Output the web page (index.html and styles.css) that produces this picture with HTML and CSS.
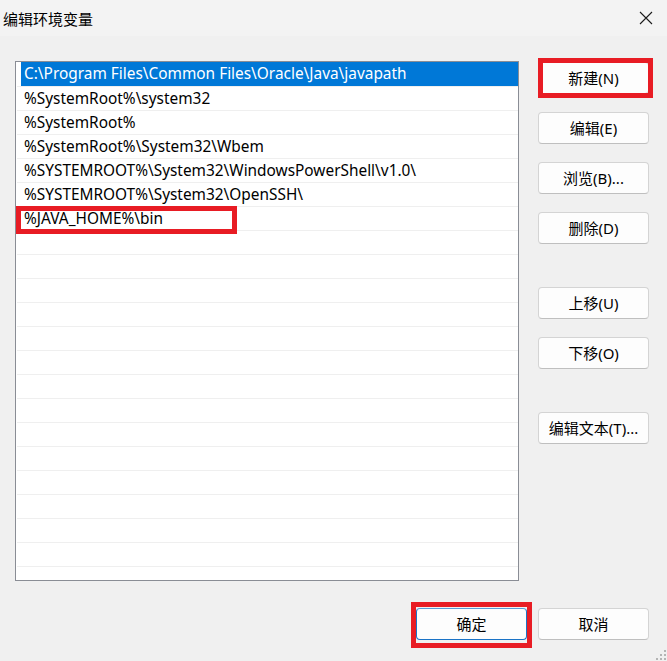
FILE: index.html
```html
<!DOCTYPE html>
<html lang="zh-CN">
<head>
  <meta charset="UTF-8">
  <meta name="viewport" content="width=device-width, initial-scale=1.0">
  <title>编辑环境变量</title>
  <link rel="stylesheet" href="styles.css">
</head>
<body>

  <div class="window">
    <!-- Title bar -->
    <div class="titlebar">
      <span class="title">编辑环境变量</span>
      <svg class="close" width="14" height="14" viewBox="0 0 14 14">
        <path d="M1 1 L13 13 M13 1 L1 13" stroke="#1b1b1b" stroke-width="1.1" fill="none"/>
      </svg>
    </div>

    <div class="main">
      <!-- Path list -->
      <div class="list">
        <div class="row selected"><span class="cell">C:\Program Files\Common Files\Oracle\Java\javapath</span></div>
        <div class="row"><span class="cell">%SystemRoot%\system32</span></div>
        <div class="row"><span class="cell">%SystemRoot%</span></div>
        <div class="row"><span class="cell">%SystemRoot%\System32\Wbem</span></div>
        <div class="row"><span class="cell">%SYSTEMROOT%\System32\WindowsPowerShell\v1.0\</span></div>
        <div class="row"><span class="cell">%SYSTEMROOT%\System32\OpenSSH\</span></div>
        <div class="row editing"><span class="cell">%JAVA_HOME%\bin</span></div>
        <div class="row"></div>
        <div class="row"></div>
        <div class="row"></div>
        <div class="row"></div>
        <div class="row"></div>
        <div class="row"></div>
        <div class="row"></div>
        <div class="row"></div>
        <div class="row"></div>
        <div class="row"></div>
        <div class="row"></div>
        <div class="row"></div>
        <div class="row"></div>
        <div class="row"></div>
        <div class="row"></div>
      </div>

      <!-- Side buttons -->
      <div class="side">
        <button class="btn marked">新建(N)</button>
        <button class="btn">编辑(E)</button>
        <button class="btn">浏览(B)...</button>
        <button class="btn">删除(D)</button>
        <button class="btn spaced">上移(U)</button>
        <button class="btn">下移(O)</button>
        <button class="btn spaced">编辑文本(T)...</button>
      </div>
    </div>

    <!-- Dialog buttons -->
    <div class="footer">
      <button class="btn default marked-ok">确定</button>
      <button class="btn">取消</button>
    </div>

    <svg class="grip" width="13" height="13" viewBox="0 0 13 13">
      <rect x="10" y="2" width="2" height="2" fill="#b4b4b4"/>
      <rect x="6" y="6" width="2" height="2" fill="#b4b4b4"/>
      <rect x="10" y="6" width="2" height="2" fill="#b4b4b4"/>
      <rect x="2" y="10" width="2" height="2" fill="#b4b4b4"/>
      <rect x="6" y="10" width="2" height="2" fill="#b4b4b4"/>
      <rect x="10" y="10" width="2" height="2" fill="#b4b4b4"/>
    </svg>
  </div>

</body>
</html>
```

FILE: styles.css
```css
body {
  margin: 0;
  padding: 0;
  background-color: #f0f0f0;
  font-family: "Noto Sans", "Noto Sans CJK SC", sans-serif;
  font-size: 15.4px;
  color: #000;
}
.window {
  width: 667px;
  height: 661px;
  display: flex;
  flex-direction: column;
  position: relative;
  overflow: hidden;
}
.titlebar {
  height: 36px;
  flex: none;
  background-color: #f3f3f3;
  display: flex;
  align-items: center;
  justify-content: space-between;
  padding: 0 14px 0 3px;
}
.title {
  font-family: "Noto Sans CJK SC", sans-serif;
  font-size: 15px;
}
.close {
  display: block;
}
.main {
  display: flex;
  gap: 19px;
  padding: 25px 0 0 15px;
}
.list {
  width: 504px;
  height: 520px;
  box-sizing: border-box;
  border: 1px solid #8a8d95;
  background-color: #fff;
  padding-left: 5px;
}
.row {
  height: 24px;
  box-sizing: border-box;
  border-top: 1px solid #efefef;
  margin-left: -4px;
  padding-left: 4px;
  line-height: 23px;
  white-space: nowrap;
  position: relative;
}
.row .cell {
  display: block;
  padding-left: 3px;
}
.row.selected {
  border-top: none;
  line-height: 24px;
}
.row.selected .cell {
  background-color: #0078d7;
  color: #fff;
}
.row.editing::after {
  content: "";
  position: absolute;
  z-index: 1;
  left: -1px;
  top: -1px;
  width: 221px;
  height: 28px;
  box-sizing: border-box;
  border: 5px solid #e81c24;
}
.side {
  display: flex;
  flex-direction: column;
  padding-top: 1px;
}
.btn {
  width: 111px;
  height: 32px;
  box-sizing: border-box;
  border: 1px solid #d4d4d4;
  border-bottom-color: #bfbfbf;
  border-radius: 4px;
  background-color: #fdfdfd;
  font-family: "Noto Sans", "Noto Sans CJK SC", sans-serif;
  font-size: 15px;
  color: #000;
  padding: 0 0 1px;
  position: relative;
}
.side .btn + .btn {
  margin-top: 18px;
}
.side .btn.spaced {
  margin-top: 43px;
}
.btn.default {
  border-color: #1a73c6;
  border-top-color: #5a9ad6;
}
.btn.marked::after {
  content: "";
  position: absolute;
  left: -1px;
  right: -5px;
  top: -5px;
  bottom: -5px;
  border: 5px solid #e81c24;
}
.btn.marked-ok::after {
  content: "";
  position: absolute;
  left: -6px;
  right: -6px;
  top: -7px;
  bottom: -9px;
  border: 5px solid #e81c24;
}
.footer {
  margin-top: auto;
  display: flex;
  justify-content: flex-end;
  gap: 11px;
  padding: 0 18px 21px 0;
}
.grip {
  position: absolute;
  right: 0;
  bottom: 0;
}
```
